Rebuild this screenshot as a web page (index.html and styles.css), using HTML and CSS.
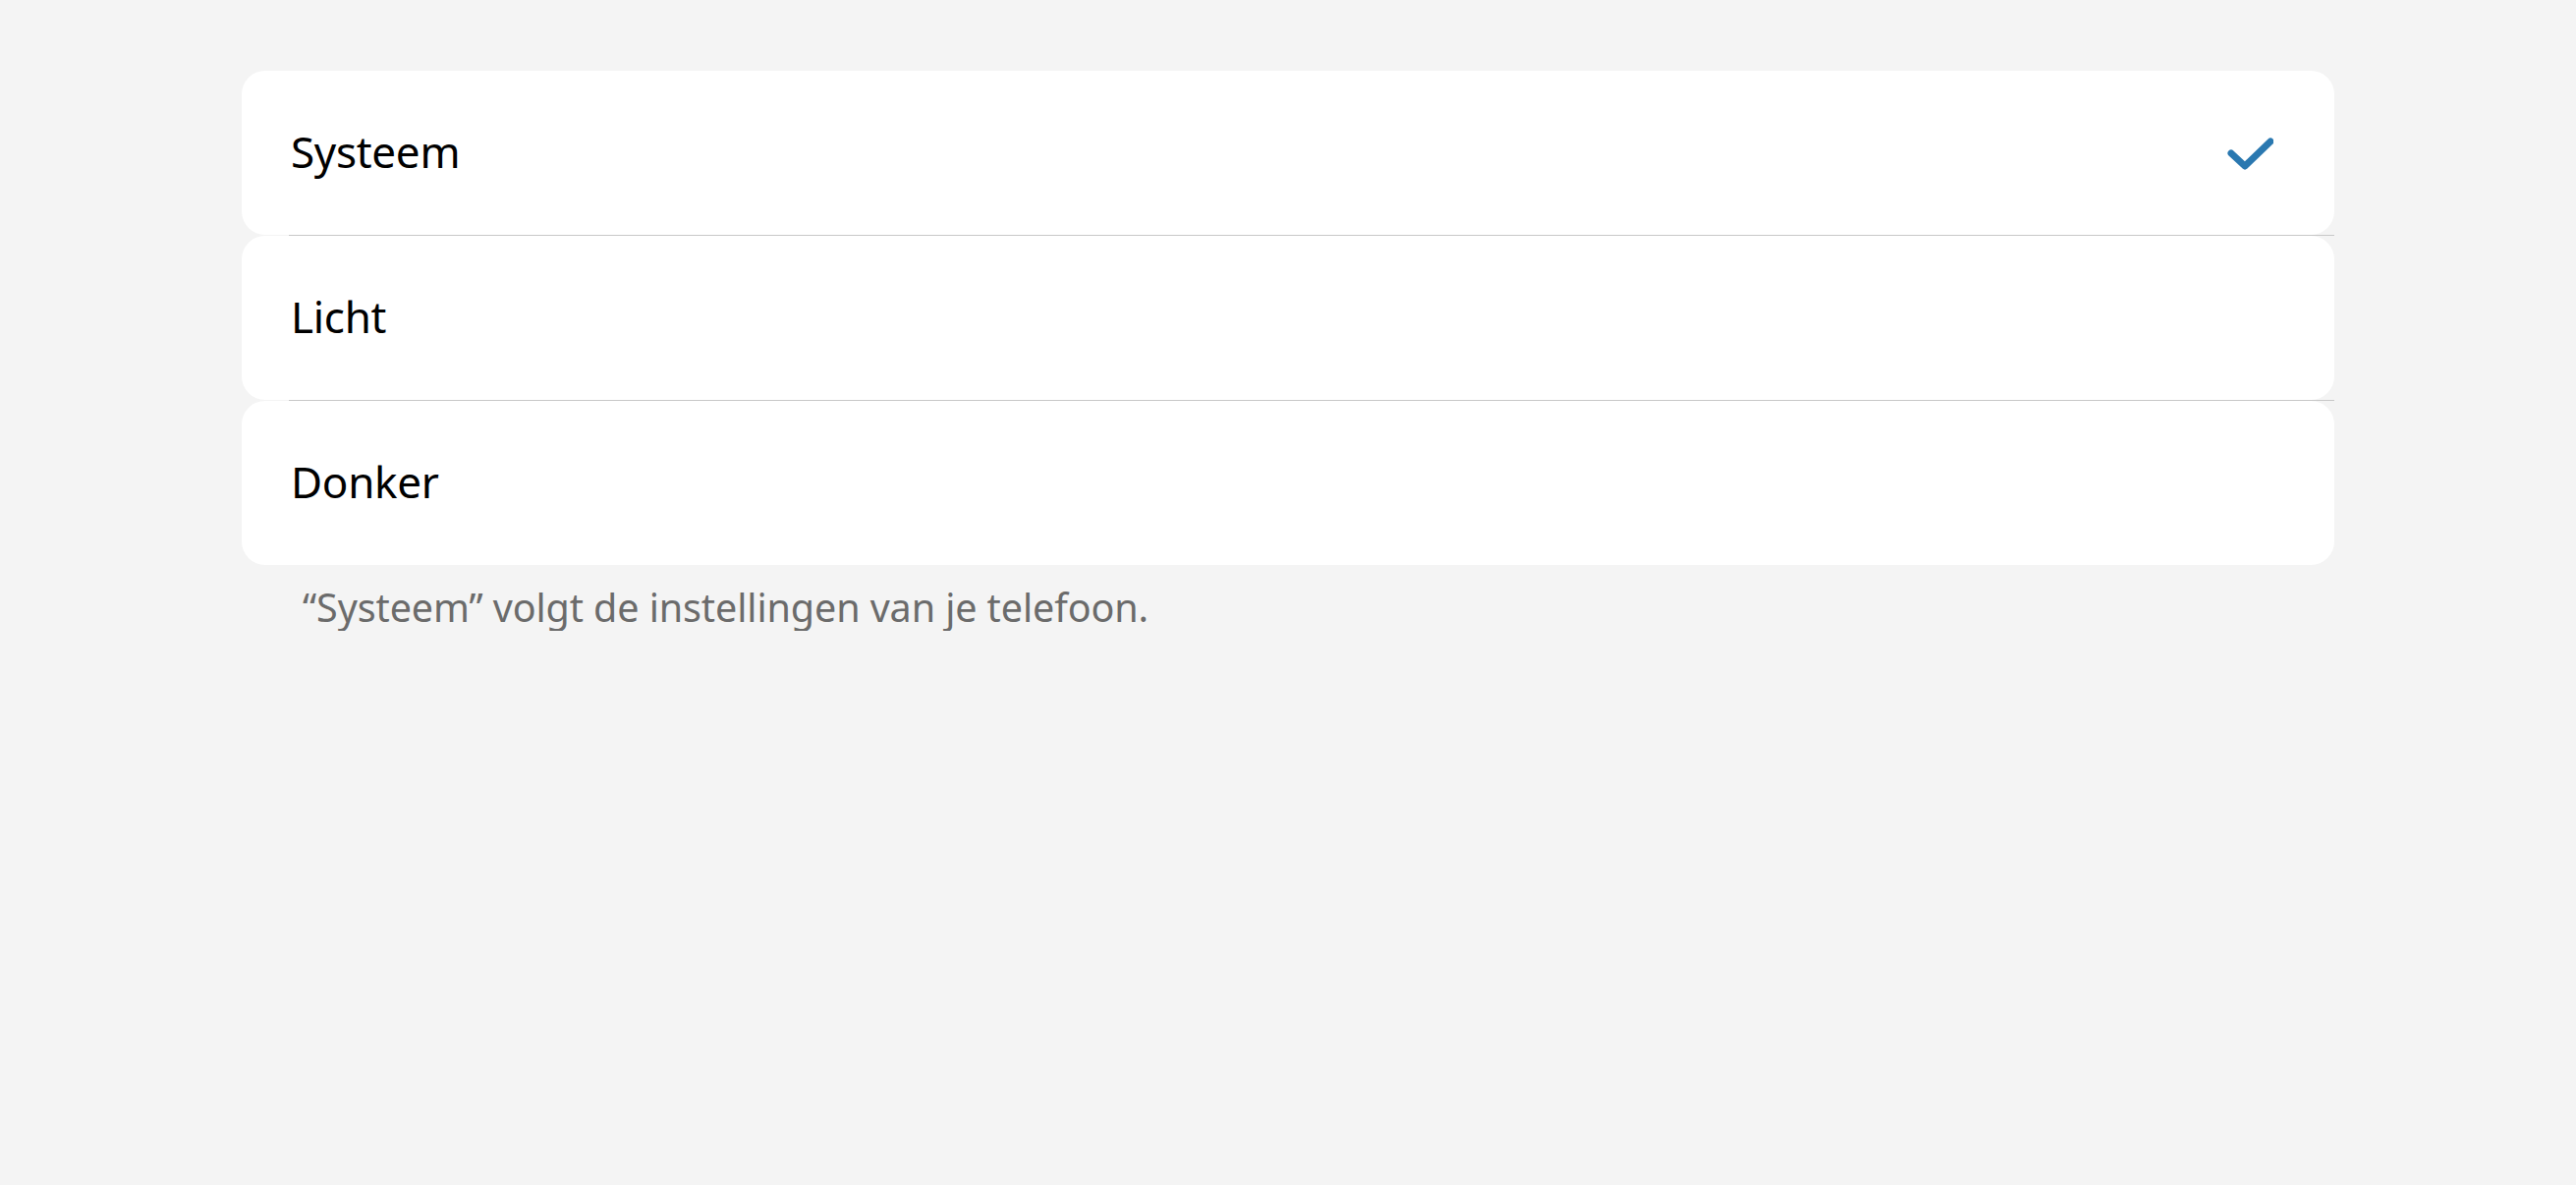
FILE: index.html
```html
<!DOCTYPE html>
<html lang="nl">
<head>
<meta charset="utf-8">
<title>Weergave</title>
<link rel="stylesheet" href="styles.css">
</head>
<body>
<main class="page">
  <ul class="options">
    <li class="option">
      <span class="label">Systeem</span>
      <svg class="check" width="48" height="36" viewBox="0 0 48 36" aria-hidden="true">
        <polyline points="5,18 19,31 45,6" fill="none" stroke="#2a78b0" stroke-width="7" stroke-linecap="round" stroke-linejoin="round"/>
      </svg>
    </li>
    <li class="divider"></li>
    <li class="option">
      <span class="label">Licht</span>
    </li>
    <li class="divider"></li>
    <li class="option">
      <span class="label">Donker</span>
    </li>
  </ul>
  <p class="note">“Systeem” volgt de instellingen van je telefoon.</p>
</main>
</body>
</html>
```

FILE: styles.css
```css
html, body {
  margin: 0;
  padding: 0;
  background: #f4f4f4;
}

body {
  font-family: "Noto Sans", "Open Sans", sans-serif;
  color: #000;
}

.page {
  padding: 72px 0 0 246px;
  width: 2130px;
}

.options {
  list-style: none;
  margin: 0;
  padding: 0;
  display: flex;
  flex-direction: column;
}

.option {
  height: 167px;
  background: #fff;
  border-radius: 24px;
  display: flex;
  align-items: center;
  justify-content: space-between;
  padding: 0 62px 0 50px;
}

.divider {
  height: 1px;
  background: #c8c8c8;
  margin-left: 48px;
}

.label {
  font-size: 44px;
  letter-spacing: -0.3px;
  line-height: 1;
  margin-top: -4px;
}

.check {
  display: block;
}

.note {
  margin: 20px 0 0 62px;
  font-size: 39.5px;
  color: #6b6b6b;
  letter-spacing: -0.1px;
  line-height: 1.2;
}
```
